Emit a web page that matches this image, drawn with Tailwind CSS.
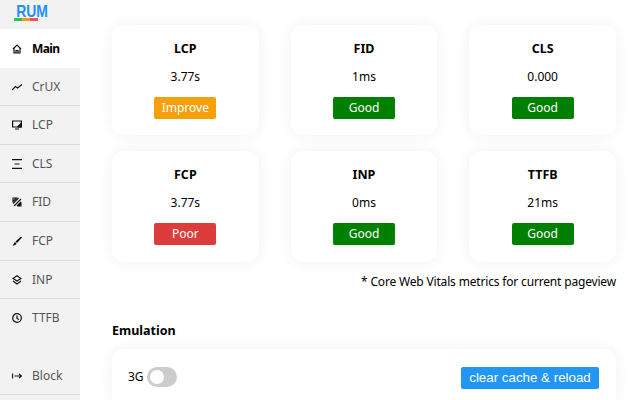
<!DOCTYPE html>
<html lang="en">
  <head>
    <meta charset="UTF-8" />
    <title>RUM</title>
    <script src="https://cdn.jsdelivr.net/npm/@tailwindcss/browser@4"></script>
  </head>
  <body class="h-[400px] overflow-hidden bg-white font-['Noto_Sans',sans-serif] text-black">
    <div class="flex h-[400px] overflow-hidden">
      <nav class="flex h-[400px] w-20 shrink-0 flex-col bg-[#f2f2f2] text-[12px] text-[#555]">
        <div class="flex h-[29px] shrink-0 pt-[5px] pl-[14px]">
          <div class="flex w-6 flex-col">
            <span class="h-[13px] scale-x-[0.82] text-center font-['Liberation_Sans',sans-serif] text-[17px] leading-[14px] font-bold text-[#1e90ff]">RUM</span>
            <div class="flex h-[3px]">
              <div class="w-2 bg-[#22c55e]"></div>
              <div class="w-2 bg-[#f59e0b]"></div>
              <div class="w-2 bg-[#ef5350]"></div>
            </div>
          </div>
        </div>
        <a class="flex h-[39px] shrink-0 items-center gap-[10px] bg-white pl-3 font-bold tracking-[-0.6px] text-black">
          <svg class="size-[10px]" viewBox="0 0 10 10" fill="none" stroke="#111" stroke-width="1.2"><path d="M1 5 5 1l4 4M2 4.5V9h6V4.5M4 9V6.5h2V9" /></svg>
          Main
        </a>
        <a class="flex h-[38px] shrink-0 items-center gap-[10px] border-b border-[#dcdcdc] pl-3">
          <svg class="size-[10px]" viewBox="0 0 10 10" fill="none" stroke="#111" stroke-width="1.1"><path d="M0 8 3.500 4.500 5.500 6 10 2.500" /></svg>
          CrUX
        </a>
        <a class="flex h-[39px] shrink-0 items-center gap-[10px] border-b border-[#dcdcdc] pl-3">
          <svg class="size-[10px]" viewBox="0 0 10 10" fill="none" stroke="#111" stroke-width="1.2"><path d="M.6 1h8.800v6H.6zM3 9h4" /><path d="M6 6.500 9 3.500V7H6z" fill="#111" /></svg>
          LCP
        </a>
        <a class="flex h-[38px] shrink-0 items-center gap-[10px] border-b border-[#dcdcdc] pl-3">
          <svg class="size-[10px]" viewBox="0 0 10 10" fill="none" stroke="#111" stroke-width="1.1"><path d="M0 .6h10M2.500 5h5M0 9.400h10" /></svg>
          CLS
        </a>
        <a class="flex h-[39px] shrink-0 items-center gap-[10px] border-b border-[#dcdcdc] pl-3">
          <svg class="size-[10px]" viewBox="0 0 10 10" fill="none" stroke="#111" stroke-width="1.1"><path d="M1 1h3.500L1 4.500zM1 6.500 6.500 1M2 9l7-7M5 9l4-4M6.500 9H9V6.500z" /></svg>
          FID
        </a>
        <a class="flex h-[39px] shrink-0 items-center gap-[10px] border-b border-[#dcdcdc] pl-3">
          <svg class="size-[10px]" viewBox="0 0 10 10" fill="#111"><path d="M9 .5 10 1.500 5 7 3.500 5.500zM3 6l1.500 1.500C4 9 2.500 9.500 .5 9.500 1.800 8.800 1.800 6.800 3 6z" /></svg>
          FCP
        </a>
        <a class="flex h-[38px] shrink-0 items-center gap-[10px] border-b border-[#dcdcdc] pl-3">
          <svg class="size-[10px]" viewBox="0 0 10 10" fill="none" stroke="#111" stroke-width="1.2"><path d="M5 .8 9 3.500 5 6 1 3.500zM1 6l4 3 4-3" /></svg>
          INP
        </a>
        <a class="flex h-[38px] shrink-0 items-center gap-[10px] pl-3">
          <svg class="size-[10px]" viewBox="0 0 10 10" fill="none" stroke="#111" stroke-width="1.2"><circle cx="5" cy="5" r="4.300" /><path d="M5 2.500V5.500L7 6.500" /></svg>
          TTFB
        </a>
        <div class="h-[20px] shrink-0"></div>
        <a class="flex h-[38px] shrink-0 items-center gap-[10px] border-b border-[#dcdcdc] pl-3">
          <svg class="size-[10px]" viewBox="0 0 10 10" fill="none" stroke="#111" stroke-width="1.1"><path d="M.6 2.500v5M2.500 5h7M7 3l2.500 2L7 7" /></svg>
          Block
        </a>
      </nav>
      <main class="flex-1 pt-[25px] pr-6 pl-8">
        <div class="grid grid-cols-3 gap-x-8 gap-y-4">
          <div class="flex h-[110px] flex-col items-center rounded-xl bg-white pt-[15px] shadow-[0_0_16px_rgba(0,0,0,0.06)]">
            <h2 class="text-[12.5px] leading-[18px] font-bold">LCP</h2>
            <p class="mt-[10px] text-[12px] leading-[18px]">3.77s</p>
            <span class="mt-[11px] flex h-[22px] w-[62px] items-center justify-center rounded-[2px] bg-[#f5a00a] text-[12px] text-white">Improve</span>
          </div>
          <div class="flex h-[110px] flex-col items-center rounded-xl bg-white pt-[15px] shadow-[0_0_16px_rgba(0,0,0,0.06)]">
            <h2 class="text-[12.5px] leading-[18px] font-bold">FID</h2>
            <p class="mt-[10px] text-[12px] leading-[18px]">1ms</p>
            <span class="mt-[11px] flex h-[22px] w-[62px] items-center justify-center rounded-[2px] bg-[#008000] text-[12px] text-white">Good</span>
          </div>
          <div class="flex h-[110px] flex-col items-center rounded-xl bg-white pt-[15px] shadow-[0_0_16px_rgba(0,0,0,0.06)]">
            <h2 class="text-[12.5px] leading-[18px] font-bold">CLS</h2>
            <p class="mt-[10px] text-[12px] leading-[18px]">0.000</p>
            <span class="mt-[11px] flex h-[22px] w-[62px] items-center justify-center rounded-[2px] bg-[#008000] text-[12px] text-white">Good</span>
          </div>
          <div class="flex h-[111px] flex-col items-center rounded-xl bg-white pt-[15px] shadow-[0_0_16px_rgba(0,0,0,0.06)]">
            <h2 class="text-[12.5px] leading-[18px] font-bold">FCP</h2>
            <p class="mt-[10px] text-[12px] leading-[18px]">3.77s</p>
            <span class="mt-[11px] flex h-[22px] w-[62px] items-center justify-center rounded-[2px] bg-[#dc3c3c] text-[12px] text-white">Poor</span>
          </div>
          <div class="flex h-[111px] flex-col items-center rounded-xl bg-white pt-[15px] shadow-[0_0_16px_rgba(0,0,0,0.06)]">
            <h2 class="text-[12.5px] leading-[18px] font-bold">INP</h2>
            <p class="mt-[10px] text-[12px] leading-[18px]">0ms</p>
            <span class="mt-[11px] flex h-[22px] w-[62px] items-center justify-center rounded-[2px] bg-[#008000] text-[12px] text-white">Good</span>
          </div>
          <div class="flex h-[111px] flex-col items-center rounded-xl bg-white pt-[15px] shadow-[0_0_16px_rgba(0,0,0,0.06)]">
            <h2 class="text-[12.5px] leading-[18px] font-bold">TTFB</h2>
            <p class="mt-[10px] text-[12px] leading-[18px]">21ms</p>
            <span class="mt-[11px] flex h-[22px] w-[62px] items-center justify-center rounded-[2px] bg-[#008000] text-[12px] text-white">Good</span>
          </div>
        </div>
        <p class="mt-[11px] text-right text-[12px] leading-[18px] tracking-[-0.17px]">* Core Web Vitals metrics for current pageview</p>
        <h3 class="mt-[31px] text-[12.5px] leading-[18px] font-bold">Emulation</h3>
        <div class="mt-[9px] flex h-[60px] items-start justify-between rounded-xl bg-white pt-[18px] pr-[17px] pl-4 shadow-[0_0_16px_rgba(0,0,0,0.06)]">
          <div class="flex h-[20px] items-center gap-[3px] text-[12px]">
            3G
            <div class="flex h-[20px] w-[30px] items-center rounded-full bg-[#ccc] pl-[3px]">
              <div class="size-[14px] rounded-full bg-white"></div>
            </div>
          </div>
          <button class="h-[22px] w-[138px] rounded-[2px] bg-[#2196f3] font-['Liberation_Sans',sans-serif] text-[13.333px] text-white">clear cache &amp; reload</button>
        </div>
      </main>
    </div>
  </body>
</html>
